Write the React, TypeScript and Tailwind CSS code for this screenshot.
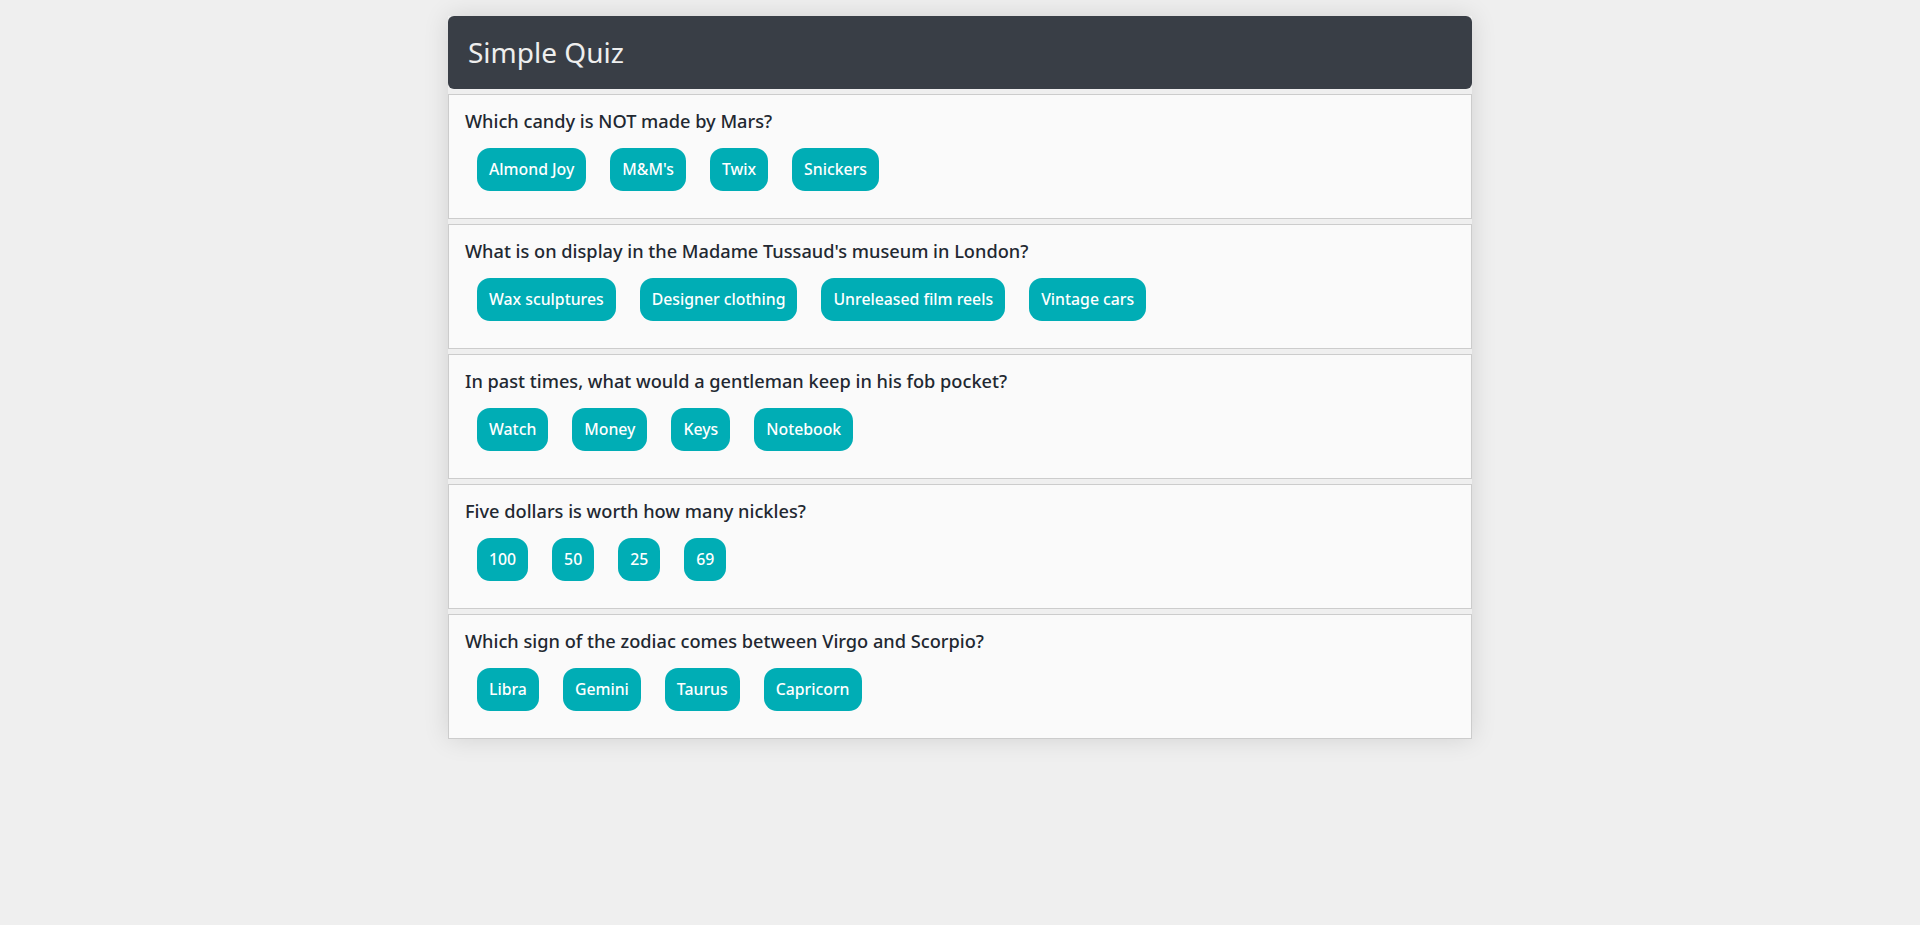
const questions = [
  {
    q: "Which candy is NOT made by Mars?",
    a: ["Almond Joy", "M&M's", "Twix", "Snickers"],
  },
  {
    q: "What is on display in the Madame Tussaud's museum in London?",
    a: ["Wax sculptures", "Designer clothing", "Unreleased film reels", "Vintage cars"],
  },
  {
    q: "In past times, what would a gentleman keep in his fob pocket?",
    a: ["Watch", "Money", "Keys", "Notebook"],
  },
  {
    q: "Five dollars is worth how many nickles?",
    a: ["100", "50", "25", "69"],
  },
  {
    q: "Which sign of the zodiac comes between Virgo and Scorpio?",
    a: ["Libra", "Gemini", "Taurus", "Capricorn"],
  },
];

function QuestionCard({ q, a }: { q: string; a: string[] }) {
  return (
    <div className="border border-[#cccccc] bg-[#fafafa] px-4 pt-[13px] pb-[27px]">
      <h3 className="text-[18.2px] leading-[26px] font-medium text-[#222831]">{q}</h3>
      <div className="mt-[14px] flex">
        {a.map((ans) => (
          <button
            key={ans}
            className="mx-3 h-[43px] rounded-[13px] bg-[#00adb5] px-3 text-[15.8px] font-medium text-white"
          >
            {ans}
          </button>
        ))}
      </div>
    </div>
  );
}

export default function App() {
  return (
    <div className="min-h-screen bg-[#efefef] pt-4 font-['Noto_Sans',sans-serif]">
      <div className="mx-auto w-[1024px] shadow-[0_0_24px_rgba(0,0,0,0.12)]">
        <header className="flex h-[73px] items-center rounded-md bg-[#393e46] px-5 pb-[2px]">
          <h1 className="text-[28px] text-[#eeeeee]">Simple Quiz</h1>
        </header>
        <div className="mt-[5px] flex flex-col gap-[5px]">
          {questions.map((item) => (
            <QuestionCard key={item.q} q={item.q} a={item.a} />
          ))}
        </div>
      </div>
    </div>
  );
}
